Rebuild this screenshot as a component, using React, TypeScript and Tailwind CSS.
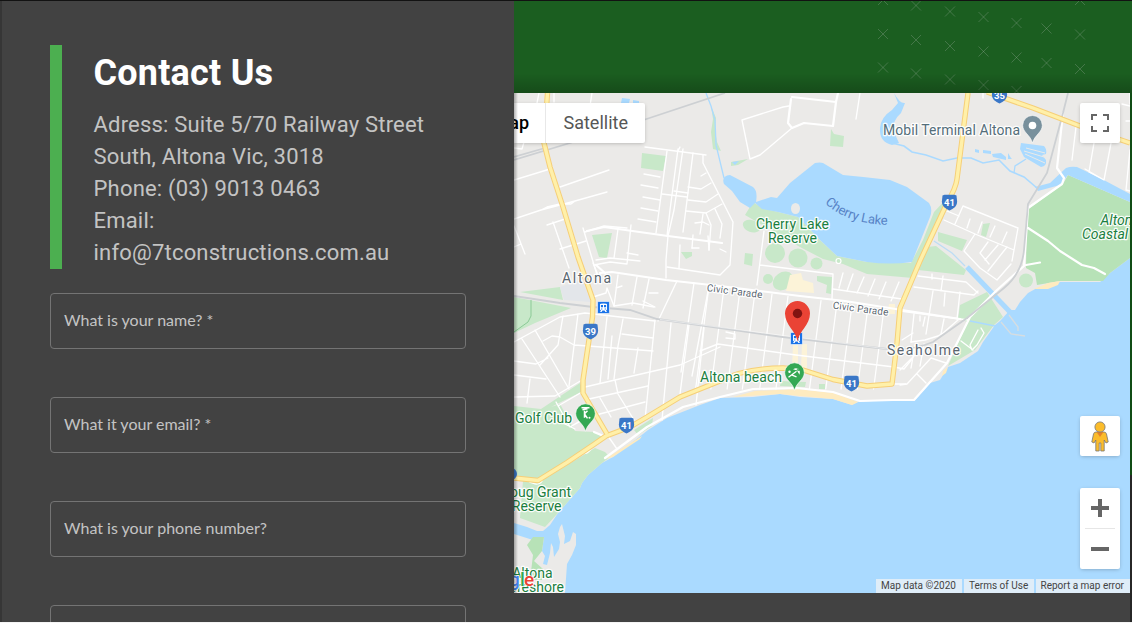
import React from "react";

const FIELDS = ["What is your name? *", "What it your email? *", "What is your phone number?", ""];

const CROSSES: [number, number][] = [
  [883, 0], [1080, 0],
  [916, 5.5], [950, 11.5], [983.5, 17], [1016.5, 23], [1046.5, 28.5], [1080, 34.5],
  [883, 34], [916, 40], [950, 46], [983.5, 51.5], [1016.5, 57.5], [1046.5, 63], [1080, 69],
  [883, 67.5], [916, 73.5], [950, 79.5], [983.5, 85], [1016.5, 91],
];

const MINOR_ROADS = [
  "M514 180 L550 169", "M560 187 L609 170", "M514 219 L541 210 L575 201 L607 192 M541 210 L547 207 L560 204 L571 204 L575 201",
  "M514 226 L525 254 M514 247 L521 244", "M514 148 L522 149 L524 142 M590 106 L592 93 M554 93 V102 M539 93 L537 103",
  "M547 225 L565 219 M553 222 L569 268 M560 249 L586 241", "M583 228 L597 275 M585 232 L604 226 L627 228",
  "M618 229 L614 258 M631 225 L627 264 M627 253 L638 255 M627 264 L610 262 L594 265",
  "M645 147 L706 155", "M680 147 L678 151 M678 149 L670 210 L667 236 M683 149 L674 210 L668 236 M667 151 L656 233 M693 153 L683 232",
  "M644 174 L660 177 M641 185 L658 188 M643 197 L660 200 M641 208 L658 211 M638 219 L656 222 M662 194 L687 197 M674 191 L688 193",
  "M688 187 L701 189 L711 183 M688 200 L706 202 L718 194 M686 211 L706 213 L722 204 M706 213 L711 225 L709 250 M715 209 L722 224 L720 238",
  "M701 176 L706 173 M695 223 L703 222 L709 225 M693 235 L692 248 M708 236 L709 250 M720 249 L726 252",
  "M668 236 L666 260 L666 278 M680 245 L679 268 M692 248 L699 248 M700 234 L703 214",
  "M742 120 L783 107 L789 106 M742 120 L750 159 L760 155 L792 128",
  "M860 93 L856 119", "M983 93 V98",
  "M1076 127 L1072 160 M1094 143 L1089 172 L1104 180 L1111 143 M1085 169 L1104 180 M1130 150 L1126 190 L1130 191 M1130 93 V104 M1122 104 L1130 106 M1126 121 H1130",
  "M963 206 L1018 228 L1012 261 M963 206 L955 224 M947 211 L959 216 M944 220 L975 234 L1014 250 M975 234 L964 251 L980 268 L997 280 L1011 264",
  "M970 219 L967 228 M982 222 L978 233 M995 226 L990 237 M1007 232 L1002 243 M988 242 L980 253 L989 264 M998 245 L985 260 M1007 247 L988 271",
  "M760 265 L833 274 L832 299 M764 231 L757 285", "M843 273 L839 288 M853 274 L847 291 M864 277 L857 293 M875 279 L868 296 M886 282 L879 299 M899 282 L891 301",
  "M833 289 L902 299", "M918 276 L966 282 L978 293 M914 287 L974 295 L978 291 M932 274 V279 M943 276 L941 291 M960 292 L957 319 M933 291 L926 334 M945 293 L944 306",
  "M900 311 L968 320 M914 314 L911 342 M944 319 L941 334 M920 316 V321 M925 317 L923 326",
  "M911 342 L925 340 L938 336 L943 333 L958 320 M902 340 L913 333 M924 344 L920 366 M915 345 L911 368",
  "M900 370 L915 355 M900 385 L907 384 L931 358 M917 374 L926 383 M931 358 L946 363",
  "M978 330 L970 345 L972 350 L977 345 L984 333 L981 328 M961 341 L973 350",
  "M593 263 L598 275 M596 260 L610 258 L640 261 M667 267 L720 275 L730 265 L733 222 L703 163 V155",
  "M618 275 L614 306 M637 277 L632 305 M649 279 L643 308 M677 281 L658 321 M694 283 L681 372 M709 286 L692 376 M616 288 L622 286 M649 293 H658 M643 301 L655 307",
  "M593 297 L606 293 L607 288 L614 306 L633 303 L654 307",
  "M514 342 L560 317 L585 313 L655 321 M522 339 L560 397 M535 330 L569 389 M563 316 L558 345 L540 365 M578 314 L569 386 M543 341 L552 336 L560 337 L574 345 L588 346 L653 351 M514 361 L536 364 L548 358 M514 375 L546 379 M514 397 L555 396 L582 380 M530 379 L527 403",
  "M607 317 L600 383 M623 319 L618 346 L614 379 M612 336 L608 379 M622 334 L653 338 M638 348 L634 373 M655 320 L645 420 M671 323 L662 420 M689 325 L680 394 M704 328 L696 405",
  "M585 387 L615 380 L680 365 L720 347 M589 399 L648 386 M596 415 L645 402 M615 380 L618 394 L634 420 M600 398 L611 417 M556 402 L570 427 L588 416 M558 406 L582 392 M563 423 L575 429 M570 427 L590 416 M608 436 L617 449",
  "M700 351 L718 344 L796 355 L894 367", "M726 332 L735 334 V339 L726 338 M755 369 L753 380",
  "M894 367 L904 369 L912 359 M891 384 H906",
];

const MAJOR_ROADS = [
  "M600 273 L612 272 L666 280 L720 286 L800 296 L845 301 L902 310 L960 319",
  "M1063 113 L1057 168 L1064 178 L1062 184 L1028 208 L1024 266 L997 290 L970 317 L947 363 L914 400 L893 400 L860 401 L833 392 L797 388 L753 389 L720 397 L683 407 L647 427 L605 458",
  "M587 231 L604 227 L668 236 L722 243 M605 273 L596 265",
  "M792 97 L836 102 L838 93 M836 102 L833 126 L804 123 L792 128 L788 123 L791 99",
  "M594 432 L606 437 M1028 228 L1048 241 L1060 251 L1082 265 L1094 268 L1105 274 M1026 265 L1040 262.5",
];

const GRID_TOPS = [709, 724, 740, 755, 772, 788, 821, 837, 852, 868, 884];

const HALO = "[paint-order:stroke] stroke-white/90 [stroke-width:2.5px] [stroke-linejoin:round]";

function Shield({ x, y, label }: { x: number; y: number; label: string }) {
  return (
    <g transform={`translate(${x} ${y})`}>
      <path d="M-7 -7 L-5 -7.8 H5 L7 -7 L7.6 -1 C7.6 4 4 6 0 8 C-4 6 -7.6 4 -7.6 -1 Z" fill="#3a77c7" />
      <text y="3.2" textAnchor="middle" fill="#fff" className="font-['Roboto',sans-serif] text-[9.5px] font-bold">{label}</text>
    </g>
  );
}

function PlacePin({ x, y, color, children }: { x: number; y: number; color: string; children: React.ReactNode }) {
  return (
    <g transform={`translate(${x} ${y})`}>
      <path d="M0 17.5 C-2 9.5 -9.8 7 -9.8 -.2 A9.8 9.8 0 0 1 9.8 -.2 C9.8 7 2 9.5 0 17.5 Z" fill={color} stroke="#fff" strokeWidth=".6" />
      {children}
    </g>
  );
}

function MapDrawing() {
  return (
    <svg className="block h-full w-full font-['Roboto',sans-serif] text-[14px]" viewBox="514 93 616 500">
      <rect x="514" y="93" width="616" height="500" fill="#aadaff" />
      <path fill="#ebeae8" d="M514 93 H1130 V258 L1110 273 L1100 282 H1060 L1048 288 L1037 288 L1028 293 L1020 302 L1015 310 H1010 L1000 321 L995 325 L983 342 L978 351 L960 363 L948 367 L940 380 L930 383 L914 401 L887 400 L858 402 L852 405 L833 399 L800 397 L780 394 L753 397 L720 398 L700 405 L667 418 L648 430 L638 438 L613 457 L602 463 L588 475 L582 483 L580 488 L558 513 L550 525 L543 531 H537 L527 527 L514 523 Z" />
      <path fill="#ebeae8" d="M514 534 L533 540 L535 537 L544 537 L542 551 L545 556 L543 564 L547 565 L550 553 L551 543 L553 547 L554 557 L559 549 L560 542 L558 534 L560 527 L562 524 L565 536 L564 544 L570 541 L573 532 L576 534 L576 545 L572 555 L567 564 L565 593 H514 Z" />

      <g fill="#c8e8c9">
        <path d="M514 406 L541 409 L580 383 L583 391 L551 407 L560 404 L575 431 L594 432 L604 438 L538 480 L514 475 Z" />
        <path d="M538 483 L595 448 L605 452 L610 457 L602 463 L588 475 L582 483 L580 488 L558 513 L545 527 L520 518 L523 481 Z" />
        <path d="M642 153 L666 156 L663 171 L641 168 Z M592 235 L612 233 L607 258 L599 257 Z M681 252 H692 L692 256 L686 259 Z" />
        <path d="M520 292 L560 287 L563 300 Z M514 297 L571 308 L535 323 L514 333 Z" />
        <path d="M753 202 L745 215 L800 247 L823 259 L843 264 L867 274 L913 278 L922 259 L948 207 L958 178 L950 195 L934 212 L923 240 L911 263 L867 262 L837 256 L820 240 L798 217 L762 208 Z" />
        <path d="M938 232 L967 240 L962 251 L938 241 Z M936 246 L966 270 L964 275 L918 270 L927 247 Z" />
        <path d="M983 224 L990 223 L986 237 L981 235 Z M958 319 L960 305 L987 292 L1003 317 L994 325 L975 350 L948 366 L955 350 L968 322 Z" />
        <path d="M831 129 L834 134 L844 136 L843 147 L830 146 Z M711 106 L716 118 L715 130 L717 142 L721 151 L713 149 L711 132 L713 119 Z M731 162 L748 159 L738 165 L731 166 Z" />
        <path d="M745 253 L753 254 L752 266 L744 264 Z M817 276 L832 277 L831 294 L826 293 L827 285 L817 281 Z M781 381 L806 382 L805 387 L780 386 Z M819 384 H825 V389 H819 Z M634 430 L653 418 L652 426 L638 435 Z" />
        <ellipse cx="751.5" cy="226" rx="9" ry="6" transform="rotate(20 751 226)" />
        <circle cx="775" cy="253" r="10" /><circle cx="798" cy="258" r="9.5" /><circle cx="816.5" cy="263.5" r="6" /><circle cx="768" cy="279" r="5" />
        <ellipse cx="783" cy="281" rx="11" ry="8.5" transform="rotate(-35 783 281)" />
        <circle cx="1026" cy="280.5" r="7" />
      </g>
      <path fill="#b7e2b7" d="M1068 175 L1130 202 V258 L1110 273 L1103 281 L1060 281 L1037 285 L1035 273 L1026 268 L1027 210 L1063 184 Z" />
      <path fill="#b7e2b7" d="M533 537 L544 537 L542 551 L534 561 L543 569 L542 580 H530 L533 555 L527 545 Z" />
      <path fill="#e3e6ea" d="M560 287 L582 280 L591 302 L564 300 Z" />
      <path fill="#fcf3d8" d="M790 275 L801 273 L803 280 L813 283 L814 293 L786 291 Z M793 344 H798 V368 H792 Z M802 344 H807 V368 H801 Z M889 304 H895 V314 H888 Z" />
      <path fill="#feebc0" d="M733 397 L755 391 L797 389 L833 393 L858 402 L852 405 L833 399 L800 396 L780 394 Z M1034 289 L1048 283 L1060 281 L1058 285 L1048 289 Z M943 371 L948 367 L946 373 L942 376 Z M605 459 L642 436 L640 439 L613 457 Z" />

      <g fill="#aadaff">
        <path d="M815 163 Q820 162 823 163 L843 175 Q865 177 890 180 L907 187 L929 203 Q933 209 930 217 L912 262 Q890 265 867 262 L837 256 L820 240 L798 217 L778 212 L762 209 L755 203 L750 208 L740 202 L732 191 L724 184 Q721 176 730 175 L753 187 Q758 191 756 202 L771 197 L777 198 L790 183 Z" />
        <path d="M894 93 Q900 104 905 103 L901 113 Q893 120 893 130 L899 143 L892 145 Q879 142 880 128 Q881 117 892 110 L898 103 Z" />
        <path d="M1035 187 L1050 183 L1066 168 Q1071 166 1077 167 L1100 178 L1130 194 V202 L1068 175 L1060 185 L1038 191 Z" />
        <path d="M622 98 L630 99 L629 103 H621 Z M633 100 L639 101 V103 H633 Z M732 162 L739 161 L735 165 Z" />
        <path d="M975 149 L979 150 V153 L975 152 Z M983 150 L991 151 V154 L983 153 Z M992 154 L1001 153 L1006 157 V160 L993 157 Z M1008 153 L1011 158 L1012 159 H1008 Z" />
        <path d="M1021 143 L1044 146 Q1047 149 1046 154 L1042 155 L1046 160 Q1047 166 1041 167 L1024 157 L1020 149 Z" />
      </g>
      <path d="M1026 148 L1045 153 M1024 151 L1044 157 M1025 154 L1045 163" stroke="#ebeae8" strokeWidth="1" fill="none" />
      <ellipse cx="795.5" cy="208.5" rx="4.5" ry="5.5" fill="#ebeae8" />
      <g fill="none" stroke="#aadaff" strokeWidth="1.3">
        <path d="M706 93 L711 106 L715 120 L716 145 L724 178" />
        <path d="M892 143 L904 146 L912 152 L926 155 L943 161 L957 158 L971 158 L983 163 L999 160 L1010 171 L1024 177 L1037 188" strokeWidth="1.6" />
        <path d="M1026 159 L1015 166 L1014 173" /><path d="M934 241 L952 253 L965 266" stroke="#bcdcf4" />
        <path d="M967 267 L1010 312" strokeWidth="5" /><path d="M970 321 L995 326" />
      </g>
      <path d="M1001 322 L1011 334 L1025 336 M1009 315 L1018 327 V331" stroke="#d7dde0" strokeWidth="1.3" fill="none" />
      <path d="M531 300 V316 L528 322 L514 332" stroke="#8bca96" strokeWidth="1" fill="none" />

      <g fill="none" stroke="#fff" strokeLinejoin="round" strokeLinecap="round">
        {MINOR_ROADS.map((d) => <path key={d} d={d} strokeWidth="1.35" />)}
        {GRID_TOPS.map((x) => {
          const top = 286 + (x - 709) * 0.13;
          const bottom = 389;
          return <path key={x} d={`M${x} ${top} L${x - (bottom - top) * 0.13} ${bottom}`} strokeWidth="1.25" />;
        })}
        {MAJOR_ROADS.map((d) => <path key={d} d={d} strokeWidth="2.2" />)}
        <circle cx="838.5" cy="261" r="2.5" strokeWidth="1.2" />
        <path d="M582 452 Q588 456 592 447 M528 481 Q540 488 543 479" strokeWidth="1.2" />
      </g>

      <g fill="none" stroke="#cdd0d3" strokeWidth="1.8">
        <path d="M514 160 L570 143 L645 119.5 L725 93" /><path d="M514 157 L545 148" />
        <path d="M514 296 L560 303 L593 307 L630 310 L657 319 L720 328 L783 337 L887 349 Q912 351 933 342 L967 318 L1004 288 Q1022 273 1024 250 L1028 204 L1047 173 L1063 113 L1068 93" />
      </g>
      <path d="M660 319.5 L887 349" stroke="#fff" strokeWidth=".5" fill="none" />

      {([["#f6cf78", 5.4], ["#fff0a9", 3.4]] as [string, number][]).map(([color, width]) => (
        <g key={color} fill="none" stroke={color} strokeWidth={width} strokeLinejoin="round">
          <path d="M547.5 93 L544 143 L550 167 L563 207 L578 257 L593 300 L592.5 317 L587 353 L583 380 V393 L597 417 L607 434" />
          <path d="M514 478 L538 480.5 L567 462.5 L593 445 L606 436 L630 427 L647 417 L680 397 L720 381 Q745 368 783 368 L803 370 L833 379.5 L867 386 L892 384 L897 343 L900 308 L920 261 L947 203 Q956 188 957 179 L962 140 L968 93" />
          <path d="M987 92 L1033 108 L1080 126 L1130 143" />
        </g>
      ))}

      <g fill="#1b7f40" className={HALO}>
        <text x="756" y="229.3" textLength="73">Cherry Lake</text>
        <text x="768" y="243.3" textLength="49">Reserve</text>
        <text x="700" y="381.8" textLength="82">Altona beach</text>
        <text x="515" y="423" textLength="57">Golf Club</text>
        <text x="571" y="497" textAnchor="end">Doug Grant</text>
        <text x="561.5" y="511" textAnchor="end">Reserve</text>
        <text x="552.5" y="578" textAnchor="end">Altona</text>
        <text x="564" y="592" textAnchor="end">Foreshore</text>
        <g className="italic"><text x="1100.5" y="225">Altona</text><text x="1082" y="239">Coastal Park</text></g>
      </g>
      <g fill="#5a6670" className={HALO}>
        <text x="562" y="283" textLength="49">Altona</text>
        <text x="887" y="355" textLength="73">Seaholme</text>
        <g className="text-[10px]">
          <text transform="translate(706.5 291) rotate(7.5)" textLength="56">Civic Parade</text>
          <text transform="translate(832.5 308.5) rotate(7.5)" textLength="56">Civic Parade</text>
        </g>
      </g>
      <text x="883" y="135.3" textLength="137" fill="#546e7a" className={HALO}>Mobil Terminal Altona</text>
      <path id="lake-label" d="M825 203 Q846 224 890 225" fill="none" />
      <text fill="#5783c6" className="text-[13px]"><textPath href="#lake-label" textLength="68">Cherry Lake</textPath></text>

      <Shield x={590.5} y={331.5} label="39" />
      <Shield x={626.5} y={425.5} label="41" />
      <Shield x={851.5} y={383.5} label="41" />
      <Shield x={949.5} y={202.5} label="41" />
      <Shield x={999.5} y={95.5} label="35" />
      <circle cx="511" cy="474" r="6" fill="#3a77c7" />

      {[[603.5, 307.5], [796.5, 338.5]].map(([x, y]) => (
        <g key={x} transform={`translate(${x} ${y})`}>
          <rect x="-6" y="-6" width="12" height="12" rx="1.2" fill="#1a73e8" stroke="#fff" strokeWidth=".6" />
          <path d="M-3.5 -3 Q-3.5 -4 0 -4 T3.5 -3 V2 L2.5 3 L3.5 4.4 H2 L1 3 H-1 L-2 4.4 H-3.5 L-2.5 3 L-3.5 2 Z" fill="#fff" />
          <path d="M-2.6 -2.4 H-.5 V-.3 H-2.6 Z M.5 -2.4 H2.6 V-.3 H.5 Z M-2.4 1 H-1.2 V2 H-2.4 Z M1.2 1 H2.4 V2 H1.2 Z" fill="#1a73e8" />
        </g>
      ))}

      <PlacePin x={1032.5} y={125.5} color="#78909c"><circle r="3.8" fill="#fff" /></PlacePin>
      <PlacePin x={794.5} y={372.8} color="#34a853">
        <path d="M-1.5 -3.5 Q3 -6.5 5.5 -1.5 Z M2 -3 L5 2 Q6 -1 4 -4 Z" fill="#fff" />
        <path d="M2 -1.5 L-6 4.5 M-3 2 L2 4" stroke="#fff" strokeWidth="1.3" fill="none" />
        <circle cx="-5" cy="-1" r="1.2" fill="#fff" />
      </PlacePin>
      <PlacePin x={585.5} y={413.8} color="#34a853">
        <path d="M-4 -6 H4 M-3 -4 L2 -5 M-1 -3 V4 M-1 0 L2 -3 M-1 0 L2 4.5" stroke="#fff" strokeWidth="1.5" fill="none" />
        <circle cx="4" cy="4" r="1" fill="#fff" />
      </PlacePin>
      <path d="M797.5 341.5 C796 331 785 325 785 313.5 A12.5 12.5 0 0 1 810 313.5 C810 325 799 331 797.5 341.5 Z" fill="#ea4335" />
      <circle cx="797.5" cy="313.5" r="4.7" fill="#811411" />

      <g className="text-[19px] font-medium [paint-order:stroke] [stroke-width:1.5px]" stroke="#fff">
        <text x="509" y="585.5" fill="#4285f4">g</text>
        <text x="520" y="585.5" fill="#34a853">l</text>
        <text x="524" y="585.5" fill="#ea4335">e</text>
      </g>
    </svg>
  );
}

function MapPanel() {
  return (
    <div className="relative h-[500px] w-[616px] overflow-hidden">
      <MapDrawing />
      <div className="absolute top-2.5 left-0 flex h-10 w-[131px] justify-end rounded-r-[2px] bg-white font-['Roboto',sans-serif] text-[18px] leading-10 whitespace-nowrap shadow-[0_1px_4px_-1px_rgba(0,0,0,.3)]">
        <span className="pr-4 font-medium text-black">Map</span>
        <span className="w-[100px] shrink-0 border-l border-[#e8e8e8] pl-[17.5px] text-[#565656]">Satellite</span>
      </div>
      <div className="absolute top-2.5 right-2.5 flex size-10 items-center justify-center rounded-[2px] bg-white shadow-[0_1px_4px_-1px_rgba(0,0,0,.3)]">
        <svg viewBox="0 0 18 18" className="size-[18px]"><path d="M0 0H6V2H2V6H0ZM12 0H18V6H16V2H12ZM0 12H2V16H6V18H0ZM16 12H18V18H12V16H16Z" fill="#666" /></svg>
      </div>
      <div className="absolute top-[323px] right-2.5 flex size-10 items-center justify-center rounded-[2px] bg-white shadow-[0_1px_4px_-1px_rgba(0,0,0,.3)]">
        <svg viewBox="0 0 18 31" className="h-[31px] w-[18px]" stroke="#777" strokeWidth=".8">
          <path d="M5 11 H13 Q15 11 15.5 13 L17.2 21 L15 22 L13.2 19 V30 H9.8 V22 H8.2 V30 H4.8 V19 L3 22 L.8 21 L2.5 13 Q3 11 5 11Z" fill="#fbbc2b" />
          <path d="M5.5 11 H12.5 L9 16Z" fill="#e5832a" stroke="none" />
          <circle cx="9" cy="6" r="5.1" fill="#fbbc2b" />
        </svg>
      </div>
      <div className="absolute top-[395px] right-2.5 flex h-[81px] w-10 flex-col items-center rounded-[2px] bg-white shadow-[0_1px_4px_-1px_rgba(0,0,0,.3)]">
        <svg viewBox="0 0 40 40" className="size-10"><path d="M11 18H18V11H22V18H29V22H22V29H18V22H11Z" fill="#666" /></svg>
        <div className="h-px w-[30px] bg-[#e6e6e6]" />
        <svg viewBox="0 0 40 40" className="size-10"><path d="M11 18H29V22H11Z" fill="#666" /></svg>
      </div>
      <div className="absolute right-0 bottom-0 flex h-3.5 gap-0.5 font-['Roboto',sans-serif] text-[10px] leading-[13px] whitespace-nowrap text-[#444]">
        <span className="w-[86px] bg-[#f5f5f5]/70 pl-[5px]">Map data ©2020</span>
        <span className="w-[70px] bg-[#f5f5f5]/70 pl-[5px]">Terms of Use</span>
        <span className="w-[94px] bg-[#f5f5f5]/70 pl-[4.5px]">Report a map error</span>
      </div>
      <div className="absolute inset-y-0 left-0 w-1 bg-linear-to-r from-black/30 to-transparent" />
    </div>
  );
}

export default function App() {
  return (
    <div className="h-[623px] w-[1132px] overflow-hidden bg-[#f5f5f5]">
      <div className="flex h-[622px] overflow-hidden border-t border-[#121212] bg-[#424242]">
        <section className="w-[514px] shrink-0 border-l-2 border-[#363636] pt-11 pr-12 pl-12 font-['Roboto',sans-serif]">
          <div className="h-56 border-l-12 border-[#4caf50] pl-[31.5px] whitespace-nowrap">
            <h1 className="h-16 text-[36px] leading-[57px] font-bold tracking-[0.22px] text-white">Contact Us</h1>
            <div className="text-[22px] leading-8 tracking-[0.2px] text-white/70">
              <p>Adress: Suite 5/70 Railway Street</p>
              <p>South, Altona Vic, 3018</p>
              <p>Phone: (03) 9013 0463</p>
              <p>Email:</p>
              <p>info@7tconstructions.com.au</p>
            </div>
          </div>
          <form className="mt-6 flex flex-col gap-12">
            {FIELDS.map((label, i) => (
              <label key={i} className="flex h-14 shrink-0 items-center rounded border border-[#747474] pb-0.5 pl-[13px] font-['Lato',sans-serif] text-[16px] text-white/70">
                {label}
              </label>
            ))}
          </form>
        </section>
        <section className="flex min-w-0 flex-1 flex-col">
          <div className="relative h-[92px] shrink-0 bg-[#1b5e20]">
            <svg viewBox="514 1 618 92" className="block h-full w-full">
              {CROSSES.map(([x, y]) => (
                <path key={`${x}-${y}`} d={`M${x - 5} ${y - 5} l10 10 m0 -10 l-10 10`} stroke="#c8c8c8" strokeOpacity=".27" strokeWidth=".9" fill="none" />
              ))}
            </svg>
            <div className="absolute inset-x-0 bottom-0 h-5 bg-linear-to-b from-transparent to-black/20" />
          </div>
          <div className="flex">
            <MapPanel />
            <div className="flex w-0.5 flex-col">
              <div className="h-[382px] bg-[#104c15]" />
              <div className="h-[147px] bg-[#272727]" />
            </div>
          </div>
        </section>
      </div>
    </div>
  );
}
